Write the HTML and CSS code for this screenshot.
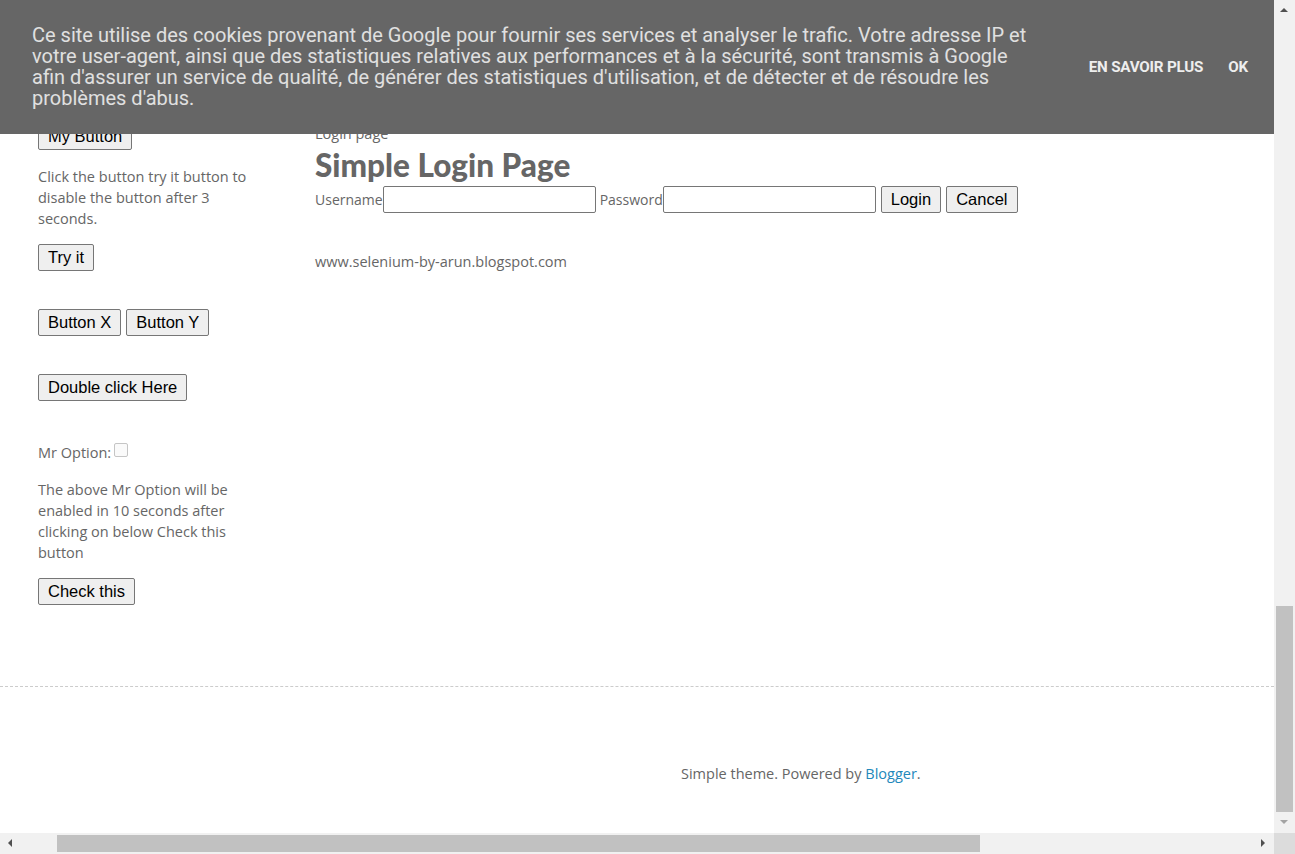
FILE: index.html
```html
<!DOCTYPE html>
<html lang="fr">
<head>
<meta charset="utf-8">
<title>Selenium by Arun</title>
<link rel="stylesheet" href="styles.css">
</head>
<body>
<div class="window">
  <div class="viewport">
    <div class="page">
      <aside class="sidebar">
        <button class="btn btn-first">My Button</button>
        <p class="note note-1">Click the button try it button to disable the button after 3 seconds.</p>
        <button class="btn">Try it</button>
        <div class="row row-xy">
          <button class="btn">Button X</button>
          <button class="btn">Button Y</button>
        </div>
        <div class="row row-dbl">
          <button class="btn">Double click Here</button>
        </div>
        <div class="option">Mr Option: <span class="checkbox"></span></div>
        <p class="note note-2">The above Mr Option will be enabled in 10 seconds after clicking on below Check this button</p>
        <button class="btn">Check this</button>
      </aside>
      <main class="main">
        <div class="crumb">Login page</div>
        <h1 class="title">Simple Login Page</h1>
        <form class="login">
          <label>Username</label><span class="input"></span>
          <label class="pw">Password</label><span class="input"></span>
          <button type="button" class="btn btn-login">Login</button>
          <button type="button" class="btn btn-cancel">Cancel</button>
        </form>
        <p class="site">www.selenium-by-arun.blogspot.com</p>
      </main>
    </div>
    <div class="divider"></div>
    <footer class="footer">Simple theme. Powered by <a href="#">Blogger</a>.</footer>

    <div class="cookie">
      <p class="cookie-text">Ce site utilise des cookies provenant de Google pour fournir ses services et analyser le trafic. Votre adresse IP et votre user-agent, ainsi que des statistiques relatives aux performances et à la sécurité, sont transmis à Google afin d'assurer un service de qualité, de générer des statistiques d'utilisation, et de détecter et de résoudre les problèmes d'abus.</p>
      <div class="cookie-actions">
        <a href="#">EN SAVOIR PLUS</a>
        <a href="#">OK</a>
      </div>
    </div>
  </div>
  <div class="vscroll">
    <div class="arrow arrow-up"></div>
    <div class="vtrack"><div class="vthumb"></div></div>
    <div class="arrow arrow-down"></div>
  </div>
  <div class="hscroll">
    <div class="arrow arrow-left"></div>
    <div class="htrack"><div class="hthumb"></div></div>
    <div class="arrow arrow-right"></div>
  </div>
  <div class="corner"></div>
</div>
</body>
</html>
```

FILE: styles.css
```css
* { box-sizing: border-box; }
html, body { margin: 0; padding: 0; }
body {
  width: 1295px;
  height: 854px;
  overflow: hidden;
  background: #fff;
  font-family: "Trebuchet MS", "Open Sans", sans-serif;
  color: #666;
}

.window {
  display: grid;
  grid-template-columns: 1274px 21px;
  grid-template-rows: 833px 21px;
  width: 1295px;
  height: 854px;
}

.viewport {
  position: relative;
  overflow: hidden;
  background: #fff;
}

.page {
  display: flex;
  padding-top: 123px;
  height: 686px;
}

.sidebar {
  width: 315px;
  padding-left: 38px;
  padding-right: 47px;
  display: flex;
  flex-direction: column;
  align-items: flex-start;
}

.btn {
  font-family: "Liberation Sans", Arial, sans-serif;
  font-size: 16.5px;
  color: #000;
  background: #efefef;
  border: 1px solid #767676;
  border-radius: 2px;
  height: 27px;
  padding: 0 9px;
  line-height: 25px;
  margin: 0;
}

.note {
  font-size: 14.5px;
  line-height: 21px;
  margin: 0;
  width: 230px;
}
.note-1 { margin-top: 16px; margin-bottom: 15px; }
.row { display: flex; gap: 5px; }
.row-xy { margin-top: 38px; }
.row-dbl { margin-top: 38px; }

.option {
  margin-top: 41px;
  font-size: 14.5px;
  line-height: 21px;
  display: flex;
  align-items: flex-start;
  gap: 3px;
}
.checkbox {
  width: 14px;
  height: 14px;
  margin-top: 1px;
  border: 1px solid #c5c5c5;
  border-radius: 2px;
  background: #fafafa;
}
.note-2 { margin-top: 16px; margin-bottom: 15px; }

.main {
  flex: 1;
  display: flex;
  flex-direction: column;
  align-items: flex-start;
}
.crumb {
  font-size: 14.5px;
  line-height: 21px;
}
.title {
  font-family: "Comic Sans MS", Lato, sans-serif;
  font-weight: 900;
  font-size: 31.5px;
  line-height: 42px;
  margin: 0;
  color: #666;
}
.login {
  display: flex;
  align-items: center;
  margin: 0;
  font-size: 14px;
}
.input {
  width: 213px;
  height: 27px;
  border: 1px solid #767676;
  border-radius: 2px;
  background: #fff;
}
.pw { margin-left: 4px; }
.btn-login { margin-left: 5px; }
.btn-cancel { margin-left: 5px; }
.site {
  font-size: 14.5px;
  line-height: 21px;
  margin: 38px 0 0 0;
}

.divider {
  border-top: 1px dashed #cccccc;
  height: 0;
}
.footer {
  font-size: 14.5px;
  line-height: 21px;
  padding-left: 681px;
  margin-top: 76px;
}
.footer a { color: #2288bb; text-decoration: none; }

.cookie {
  position: absolute;
  top: 0;
  left: 0;
  right: 0;
  height: 134px;
  background: #666;
  display: flex;
  align-items: center;
  padding: 0 26px 0 32px;
}
.cookie-text {
  margin: 0;
  width: 1000px;
  font-family: Roboto, "Noto Sans", sans-serif;
  font-size: 20px;
  line-height: 21px;
  color: #e0e0e0;
}
.cookie-actions {
  margin-left: auto;
  display: flex;
  gap: 25px;
}
.cookie-actions a {
  font-family: Roboto, "Noto Sans", sans-serif;
  font-weight: bold;
  font-size: 15.2px;
  color: #eeeeee;
  text-decoration: none;
  letter-spacing: -0.2px;
}

.vscroll {
  background: #f1f1f1;
  display: flex;
  flex-direction: column;
  align-items: center;
}
.vtrack { flex: 1; width: 100%; padding: 0 2px; }
.vthumb {
  margin-top: 585px;
  height: 206px;
  background: #c1c1c1;
}
.hscroll {
  background: #f1f1f1;
  display: flex;
  align-items: center;
}
.htrack { flex: 1; height: 100%; padding: 2px 0; }
.hthumb {
  margin-left: 36px;
  width: 923px;
  height: 17px;
  background: #c1c1c1;
}
.corner { background: #dcdcdc; }

.arrow { width: 21px; height: 21px; position: relative; flex: none; }
.arrow::after { content: ""; position: absolute; width: 0; height: 0; }
.arrow-up::after {
  left: 6px; top: 8px;
  border-left: 4px solid transparent;
  border-right: 4px solid transparent;
  border-bottom: 4px solid #505050;
}
.arrow-down::after {
  left: 6px; top: 8px;
  border-left: 4px solid transparent;
  border-right: 4px solid transparent;
  border-top: 4px solid #a3a3a3;
}
.arrow-left::after {
  left: 8px; top: 6px;
  border-top: 4px solid transparent;
  border-bottom: 4px solid transparent;
  border-right: 4px solid #505050;
}
.arrow-right::after {
  left: 8px; top: 6px;
  border-top: 4px solid transparent;
  border-bottom: 4px solid transparent;
  border-left: 4px solid #505050;
}
```
